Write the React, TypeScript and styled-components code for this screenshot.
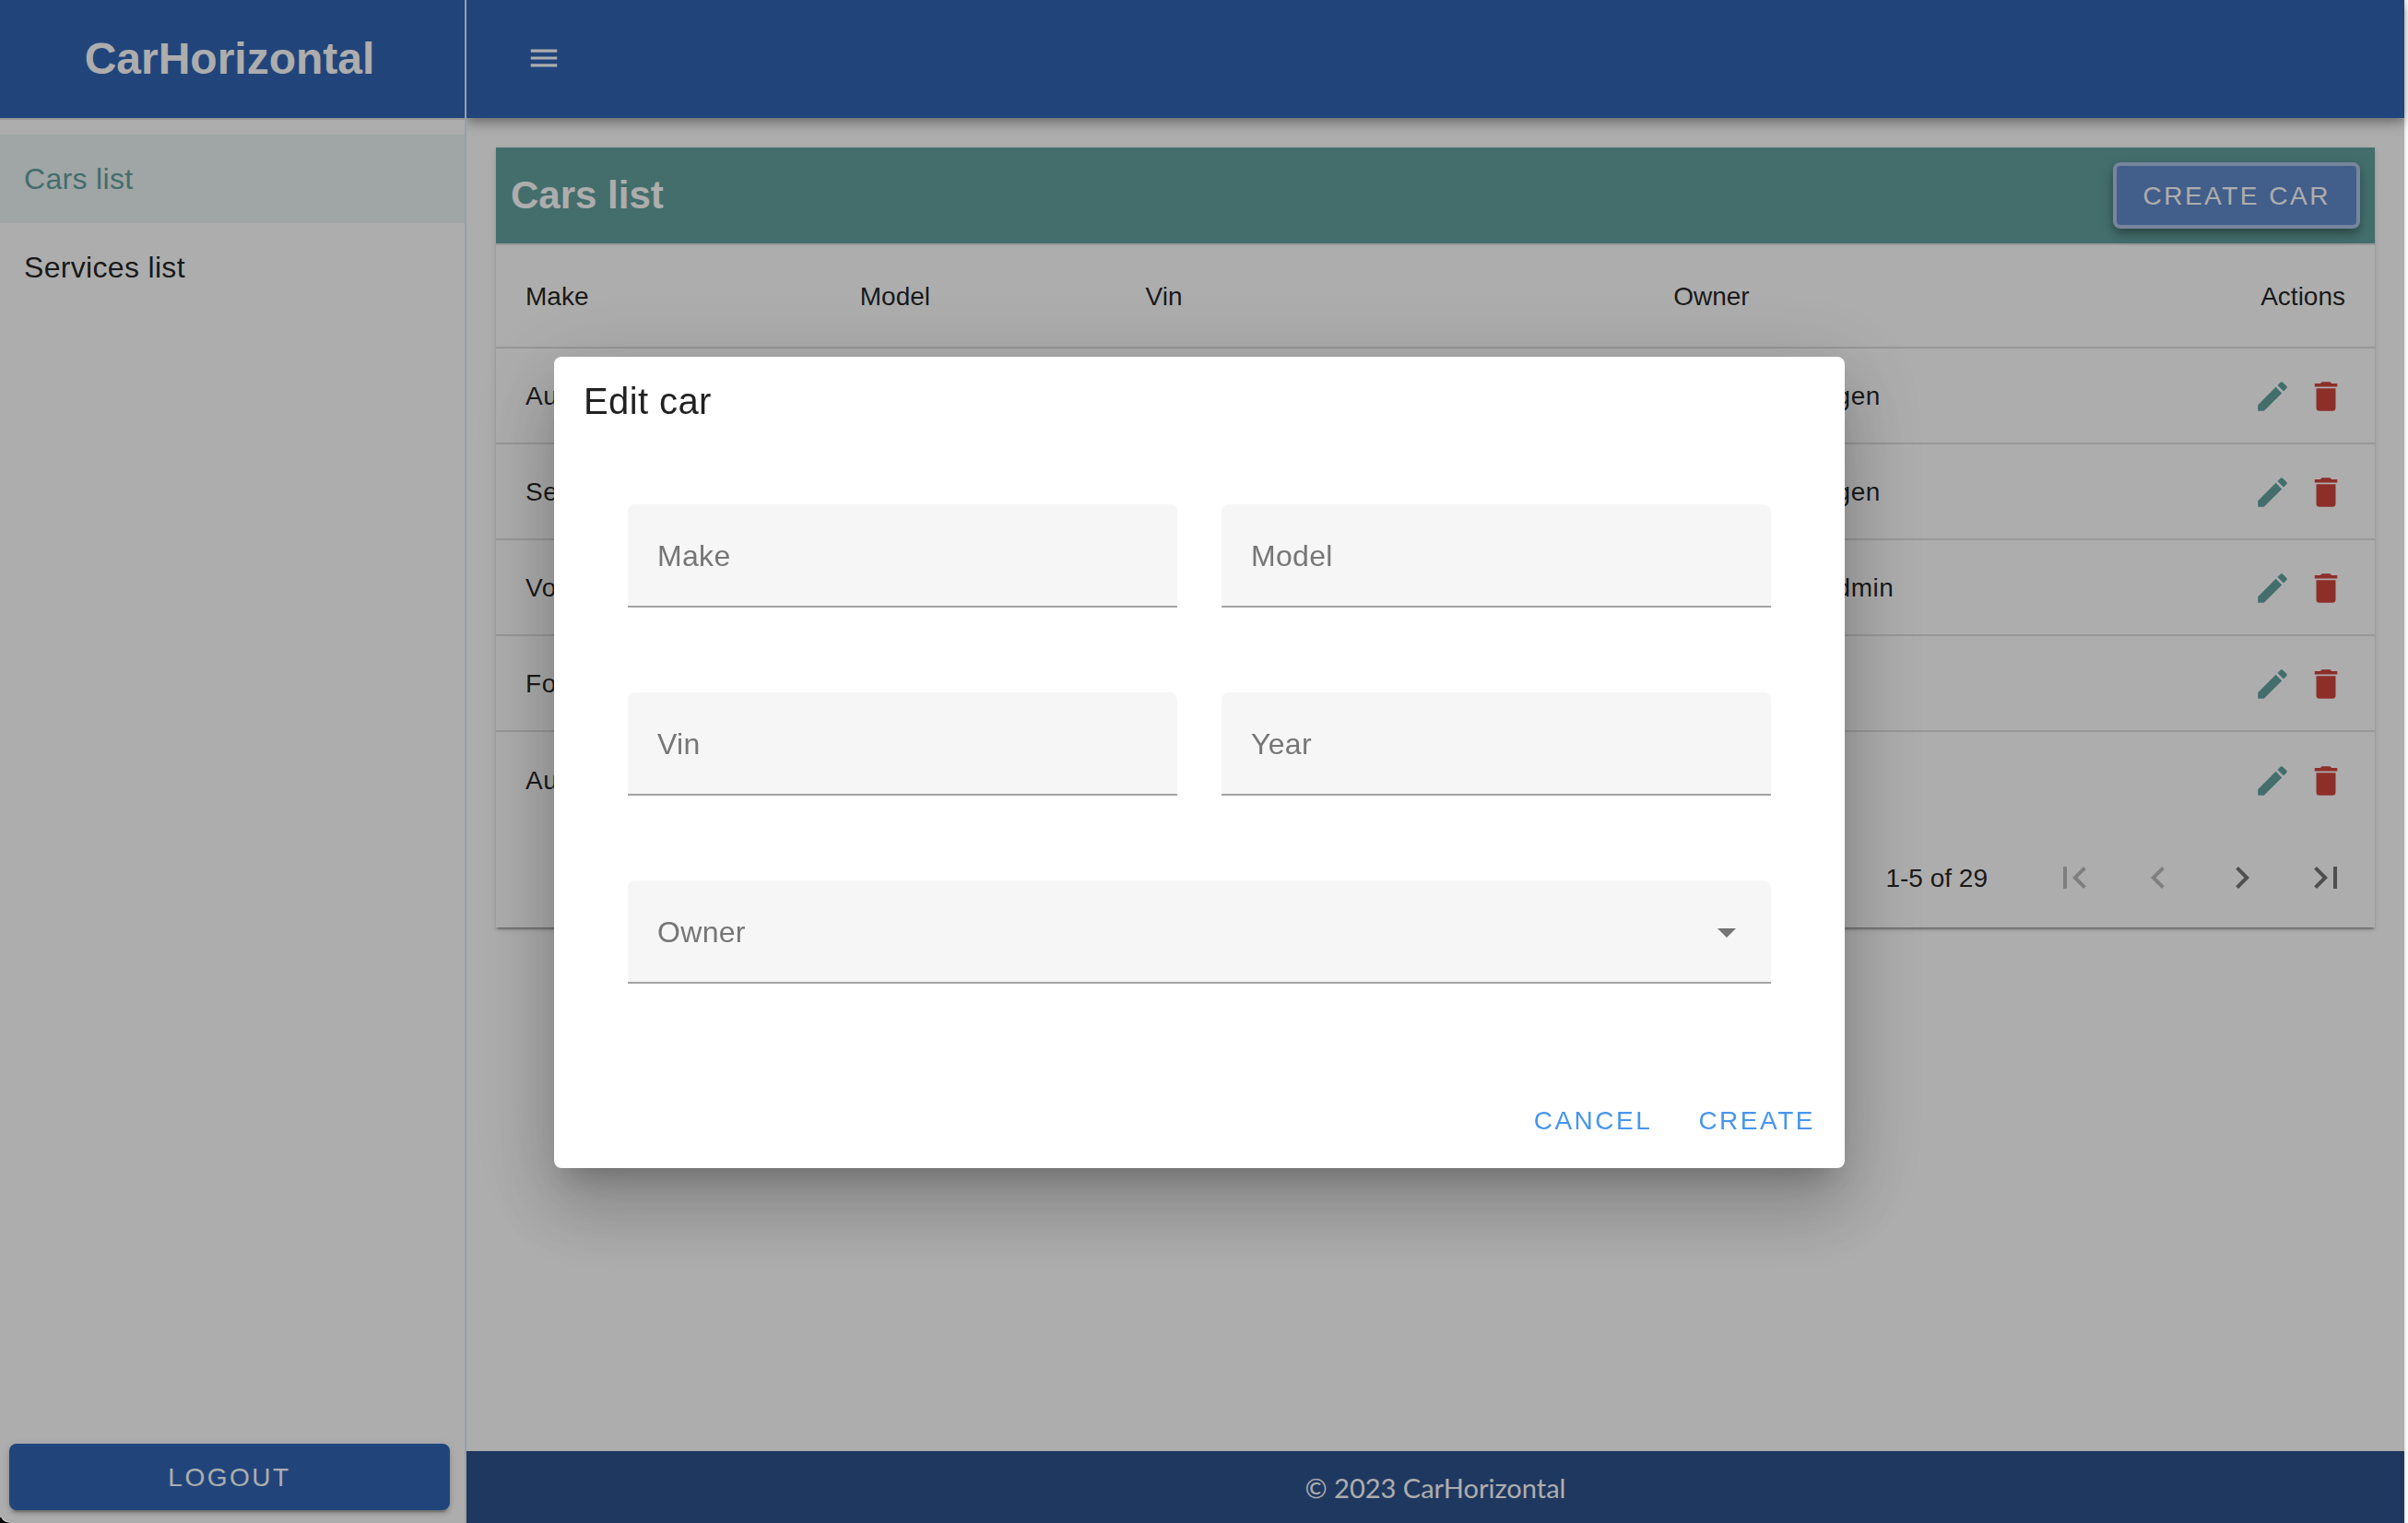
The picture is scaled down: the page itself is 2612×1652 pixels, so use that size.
import React from "react";
import styled, { createGlobalStyle } from "styled-components";

const blue = "#3266b6";
const teal = "#64a3a0";
const ink = "rgba(0, 0, 0, 0.87)";
const line = "rgba(0, 0, 0, 0.12)";

const GlobalStyle = createGlobalStyle`
  *, *::before, *::after { box-sizing: border-box; }
  body {
    margin: 0;
    background: #fafafa;
    color: ${ink};
    font-family: "Liberation Sans", Arial, sans-serif;
    font-size: 32px;
  }
  button, input, select { font: inherit; color: inherit; }
`;

const Shell = styled.div`
  display: grid;
  grid-template-columns: 506px 1fr;
  min-height: 100vh;
  margin-right: 4px;
  background: #fff;
  box-shadow: 2px 0 0 #ececec;
`;

const Sidebar = styled.aside`
  display: flex;
  flex-direction: column;
  z-index: 1;
  background: #fff;
  border-right: 2px solid #e2ebf8;
`;

const Brand = styled.div`
  display: flex;
  align-items: center;
  justify-content: center;
  height: 128px;
  padding: 0 6px 2px 0;
  background: ${blue};
  color: #fff;
  font-size: 48px;
  font-weight: 700;
`;

const Nav = styled.nav`
  flex: 1;
  padding: 16px 0;
  border-top: 2px solid ${line};
`;

const NavLink = styled.a<{ $active?: boolean }>`
  display: flex;
  align-items: center;
  height: 96px;
  padding: 0 26px;
  letter-spacing: 0.01em;
  text-decoration: none;
  color: ${(p) => (p.$active ? teal : ink)};
  background: ${(p) => (p.$active ? "rgba(100, 163, 160, 0.12)" : "transparent")};
`;

const SidebarFooter = styled.div`
  display: flex;
  padding: 0 16px 14px 10px;
`;

const Button = styled.button<{ $kind: "solid" | "focused" | "text" }>`
  height: 72px;
  padding: 2px ${(p) => (p.$kind === "focused" ? 28 : 16)}px 0;
  border: 4px solid #b0c4e8;
  border-width: ${(p) => (p.$kind === "focused" ? 4 : 0)}px;
  border-radius: 8px;
  font-size: 28px;
  letter-spacing: 0.09em;
  text-transform: uppercase;
  white-space: nowrap;
  color: ${(p) => (p.$kind === "text" ? "#4795ee" : "#fff")};
  background: ${(p) => (p.$kind === "solid" ? blue : p.$kind === "focused" ? "#628bcc" : "transparent")};
  box-shadow: ${(p) =>
    p.$kind === "text"
      ? "none"
      : p.$kind === "focused"
        ? "0 4px 8px -2px rgba(0,0,0,.2), 0 8px 10px rgba(0,0,0,.14), 0 2px 20px rgba(0,0,0,.12)"
        : "0 6px 2px -4px rgba(0,0,0,.2), 0 4px 4px rgba(0,0,0,.14), 0 2px 10px rgba(0,0,0,.12)"};
`;

const LogoutButton = styled(Button)`
  flex: 1;
`;

const Content = styled.div`
  display: flex;
  flex-direction: column;
  min-width: 0;
`;

const TopBar = styled.header`
  display: flex;
  align-items: center;
  height: 128px;
  padding: 0 0 2px 36px;
  background: ${blue};
  color: #fff;
  box-shadow: 0 4px 8px -2px rgba(0, 0, 0, 0.2), 0 8px 10px rgba(0, 0, 0, 0.14),
    0 2px 20px rgba(0, 0, 0, 0.12);
`;

const IconButton = styled.button<{ $w: number; $h: number; $color?: string }>`
  display: inline-flex;
  align-items: center;
  justify-content: center;
  width: ${(p) => p.$w}px;
  height: ${(p) => p.$h}px;
  padding: 0;
  border: 0;
  background: none;
  color: ${(p) => p.$color ?? "inherit"};
  &:disabled { opacity: 0.48; }
`;

const Main = styled.main`
  flex: 1;
  padding: 32px;
`;

const Card = styled.section`
  background: #fff;
  box-shadow: 0 4px 2px -2px rgba(0, 0, 0, 0.2), 0 2px 2px rgba(0, 0, 0, 0.14),
    0 2px 6px rgba(0, 0, 0, 0.12);
`;

const CardHeader = styled.div`
  display: flex;
  align-items: center;
  justify-content: space-between;
  height: 104px;
  padding: 0 16px;
  background: ${teal};
  color: #fff;
`;

const CardTitle = styled.h1`
  margin: 0;
  font-size: 42px;
  font-weight: 700;
`;

const Table = styled.table`
  width: 100%;
  table-layout: fixed;
  border-collapse: separate;
  border-spacing: 0;
  border-top: 2px solid ${line};
  font-size: 28px;
  letter-spacing: 0.02em;
`;

const Col = styled.col<{ $w?: string }>`
  width: ${(p) => p.$w ?? "auto"};
`;

const Th = styled.th<{ $end?: boolean }>`
  height: 112px;
  padding: 2px 32px 0;
  border-bottom: 2px solid ${line};
  font-weight: 400;
  letter-spacing: normal;
  text-align: ${(p) => (p.$end ? "right" : "left")};
`;

const Td = styled.td`
  height: 104px;
  padding: 2px 32px 0;
  border-bottom: 2px solid ${line};
  white-space: nowrap;
  tr:last-child > & { border-bottom: 0; }
`;

const RowActions = styled.div`
  display: flex;
  justify-content: flex-end;
  gap: 16px;
`;

const Pagination = styled.div`
  display: flex;
  align-items: center;
  justify-content: flex-end;
  padding: 8px;
  font-size: 28px;
`;

const Range = styled.span`
  padding-top: 2px;
  margin-right: 48px;
`;

const Footer = styled.footer`
  display: flex;
  align-items: center;
  justify-content: center;
  height: 78px;
  background: #2f538e;
  color: #fff;
  font-family: Lato, sans-serif;
  font-size: 29px;
`;

const Overlay = styled.div`
  position: fixed;
  inset: 0 4px 0 0;
  z-index: 2;
  display: flex;
  align-items: center;
  justify-content: center;
  padding: 2px 6px 0 0;
  background: rgba(0, 0, 0, 0.32);
`;

const Corner = styled.span`
  position: absolute;
  left: 0;
  bottom: 0;
  width: 10px;
  height: 6px;
  background: radial-gradient(circle at 100% -4px, transparent 8px, #ddd 9px, #000 10px);
`;

const Dialog = styled.form`
  width: 1400px;
  max-width: 90vw;
  border-radius: 8px;
  background: #fff;
  box-shadow: 0 22px 30px -14px rgba(0, 0, 0, 0.2), 0 48px 76px 6px rgba(0, 0, 0, 0.14),
    0 18px 92px 16px rgba(0, 0, 0, 0.12);
`;

const DialogTitle = styled.h2`
  margin: 0;
  padding: 16px 32px;
  font-size: 40px;
  font-weight: 400;
  line-height: 64px;
  letter-spacing: 0.01em;
`;

const Fields = styled.div`
  display: grid;
  grid-template-columns: 1fr 1fr;
  gap: 92px 48px;
  padding: 64px 80px 96px;
`;

const Field = styled.div<{ $wide?: boolean }>`
  position: relative;
  display: flex;
  grid-column: ${(p) => (p.$wide ? "1 / -1" : "auto")};
  height: 112px;
  border-radius: 8px 8px 0 0;
  border-bottom: 2px solid #a3a3a3;
  background: #f6f6f6;
`;

const Label = styled.label`
  position: absolute;
  left: 32px;
  top: 0;
  line-height: 112px;
  letter-spacing: 0.01em;
  color: #767676;
  pointer-events: none;
`;

const TextInput = styled.input`
  flex: 1;
  min-width: 0;
  padding: 32px 32px 0;
  border: 0;
  outline: 0;
  background: none;
`;

const Select = styled.select`
  flex: 1;
  padding: 32px 80px 0 32px;
  border: 0;
  outline: 0;
  appearance: none;
  background: none;
`;

const Caret = styled.span`
  position: absolute;
  right: 24px;
  top: 32px;
  display: flex;
  color: #757575;
  pointer-events: none;
`;

const DialogActions = styled.div`
  display: flex;
  justify-content: flex-end;
  gap: 18px;
  padding: 16px;
`;

const paths = {
  menu: "M3,6H21V8H3V6M3,11H21V13H3V11M3,16H21V18H3V16Z",
  pencil:
    "M20.71,7.04C21.1,6.65 21.1,6 20.71,5.63L18.37,3.29C18,2.9 17.35,2.9 16.96,3.29L15.12,5.12L18.87,8.87M3,17.25V21H6.75L17.81,9.93L14.06,6.18L3,17.25Z",
  trash: "M19,4H15.5L14.5,3H9.5L8.5,4H5V6H19M6,19A2,2 0 0,0 8,21H16A2,2 0 0,0 18,19V7H6V19Z",
  first: "M18.41,16.59L13.82,12L18.41,7.41L17,6L11,12L17,18L18.41,16.59M6,6H8V18H6V6Z",
  prev: "M15.41,16.58L10.83,12L15.41,7.41L14,6L8,12L14,18L15.41,16.58Z",
  next: "M8.59,16.58L13.17,12L8.59,7.41L10,6L16,12L10,18L8.59,16.58Z",
  last: "M5.59,7.41L10.18,12L5.59,16.59L7,18L13,12L7,6L5.59,7.41M16,6H18V18H16V6Z",
  caret: "M7,10L12,15L17,10H7Z",
};

const Icon = ({ name, size }: { name: keyof typeof paths; size: number }) => (
  <svg width={size} height={size} viewBox="0 0 24 24" fill="currentColor" aria-hidden="true">
    <path d={paths[name]} />
  </svg>
);

const cars = [
  { make: "Audi", owner: "Noah Steinhagen" },
  { make: "Seat", owner: "Noah Steinhagen" },
  { make: "Volvo", owner: "User Admin Admin" },
  { make: "Ford", owner: "" },
  { make: "Audi", owner: "" },
];

const textFields = ["Make", "Model", "Vin", "Year"];

const pager = [
  { icon: "first", label: "First page", disabled: true },
  { icon: "prev", label: "Previous page", disabled: true },
  { icon: "next", label: "Next page", disabled: false },
  { icon: "last", label: "Last page", disabled: false },
] as const;

export default function App() {
  return (
    <>
      <GlobalStyle />
      <Shell>
        <Sidebar>
          <Brand>CarHorizontal</Brand>
          <Nav>
            <NavLink href="#cars" $active>Cars list</NavLink>
            <NavLink href="#services">Services list</NavLink>
          </Nav>
          <SidebarFooter>
            <LogoutButton type="button" $kind="solid">Logout</LogoutButton>
          </SidebarFooter>
        </Sidebar>
        <Content>
          <TopBar>
            <IconButton type="button" $w={96} $h={96} aria-label="Toggle menu">
              <Icon name="menu" size={38} />
            </IconButton>
          </TopBar>
          <Main>
            <Card>
              <CardHeader>
                <CardTitle>Cars list</CardTitle>
                <Button type="button" $kind="focused">Create car</Button>
              </CardHeader>
              <Table>
                <colgroup>
                  <Col $w="17.8%" />
                  <Col $w="15.2%" />
                  <Col $w="28.1%" />
                  <Col />
                  <Col $w="10%" />
                </colgroup>
                <thead>
                  <tr>
                    <Th>Make</Th>
                    <Th>Model</Th>
                    <Th>Vin</Th>
                    <Th>Owner</Th>
                    <Th $end>Actions</Th>
                  </tr>
                </thead>
                <tbody>
                  {cars.map((car, i) => (
                    <tr key={i}>
                      <Td>{car.make}</Td>
                      <Td />
                      <Td />
                      <Td>{car.owner}</Td>
                      <Td>
                        <RowActions>
                          <IconButton type="button" $w={42} $h={42} $color={teal} aria-label="Edit">
                            <Icon name="pencil" size={42} />
                          </IconButton>
                          <IconButton type="button" $w={42} $h={42} $color="#d2443c" aria-label="Delete">
                            <Icon name="trash" size={42} />
                          </IconButton>
                        </RowActions>
                      </Td>
                    </tr>
                  ))}
                </tbody>
              </Table>
              <Pagination>
                <Range>1-5 of 29</Range>
                {pager.map((p) => (
                  <IconButton
                    key={p.icon}
                    type="button"
                    $w={91}
                    $h={92}
                    $color="#757575"
                    disabled={p.disabled}
                    aria-label={p.label}
                  >
                    <Icon name={p.icon} size={48} />
                  </IconButton>
                ))}
              </Pagination>
            </Card>
          </Main>
          <Footer>© 2023 CarHorizontal</Footer>
        </Content>
      </Shell>
      <Overlay>
        <Corner />
        <Dialog role="dialog" aria-labelledby="dialog-title">
          <DialogTitle id="dialog-title">Edit car</DialogTitle>
          <Fields>
            {textFields.map((name) => (
              <Field key={name}>
                <Label htmlFor={name}>{name}</Label>
                <TextInput id={name} type="text" />
              </Field>
            ))}
            <Field $wide>
              <Label htmlFor="Owner">Owner</Label>
              <Select id="Owner" defaultValue="">
                <option value="" />
              </Select>
              <Caret>
                <Icon name="caret" size={48} />
              </Caret>
            </Field>
          </Fields>
          <DialogActions>
            <Button type="button" $kind="text">Cancel</Button>
            <Button type="button" $kind="text">Create</Button>
          </DialogActions>
        </Dialog>
      </Overlay>
    </>
  );
}
